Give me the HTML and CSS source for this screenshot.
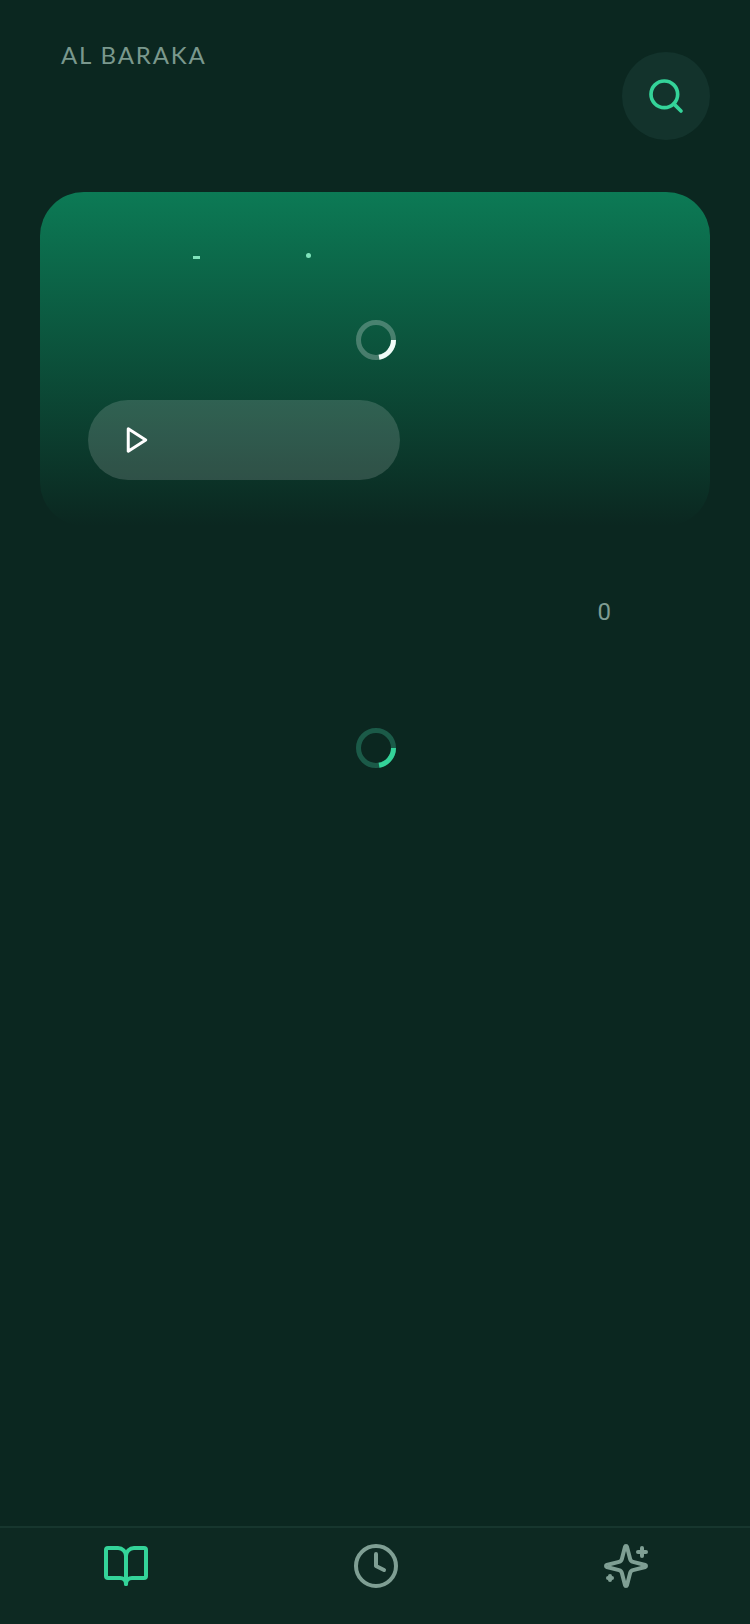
FILE: index.html
```html
<!DOCTYPE html>
<html lang="en">
<head>
    <meta charset="UTF-8">
    <title>Al Baraka</title>
    <link rel="stylesheet" href="styles.css">
</head>
<body>
<div class="page">
    <div class="top-bar">
        <div class="brand">AL BARAKA</div>
        <div class="search-btn">
            <svg class="icon-search" viewBox="0 0 24 24">
                <circle cx="11" cy="11" r="8"></circle>
                <path d="m21 21-4.3-4.3"></path>
            </svg>
        </div>
    </div>

    <div class="hero-card">
        <div class="hero-dates">
            <span class="date-dash"></span>
            <span class="date-dot"></span>
        </div>
        <svg class="spinner spinner-light" viewBox="0 0 40 40">
            <circle class="spinner-track" cx="20" cy="20" r="17.5"></circle>
            <path class="spinner-arc" d="M37.5 20A17.5 17.5 0 0 1 23.04 37.23"></path>
        </svg>
        <div class="play-pill">
            <svg class="icon-play" viewBox="0 0 24 24">
                <polygon points="5 3 19 12 5 21"></polygon>
            </svg>
        </div>
    </div>

    <div class="count-row">0</div>
    <svg class="spinner spinner-green" viewBox="0 0 40 40">
        <circle class="spinner-track" cx="20" cy="20" r="17.5"></circle>
        <path class="spinner-arc" d="M37.5 20A17.5 17.5 0 0 1 23.04 37.23"></path>
    </svg>
</div>

<div class="tab-bar">
    <div class="tab">
        <svg class="tab-icon tab-active" viewBox="0 0 24 24">
            <path d="M12 7v14"></path>
            <path d="M3 18a1 1 0 0 1-1-1V4a1 1 0 0 1 1-1h5a4 4 0 0 1 4 4 4 4 0 0 1 4-4h5a1 1 0 0 1 1 1v13a1 1 0 0 1-1 1h-6a3 3 0 0 0-3 3 3 3 0 0 0-3-3z"></path>
        </svg>
    </div>
    <div class="tab">
        <svg class="tab-icon" viewBox="0 0 24 24">
            <circle cx="12" cy="12" r="10"></circle>
            <polyline points="12 6 12 12 16 14"></polyline>
        </svg>
    </div>
    <div class="tab">
        <svg class="tab-icon" viewBox="0 0 24 24">
            <path d="M9.937 15.5A2 2 0 0 0 8.5 14.063l-6.135-1.582a.5.5 0 0 1 0-.962L8.5 9.936A2 2 0 0 0 9.937 8.5l1.582-6.135a.5.5 0 0 1 .963 0L14.063 8.5A2 2 0 0 0 15.5 9.937l6.135 1.581a.5.5 0 0 1 0 .964L15.5 14.063a2 2 0 0 0-1.437 1.437l-1.582 6.135a.5.5 0 0 1-.963 0z"></path>
            <path d="M20 3v4"></path>
            <path d="M22 5h-4"></path>
            <path d="M4 17v2"></path>
            <path d="M5 18H3"></path>
        </svg>
    </div>
</div>
</body>
</html>
```

FILE: styles.css
```css
html, body {
    height: 100%;
    margin: 0;
}

body {
    display: flex;
    flex-direction: column;
    background: #0b2720;
    font-family: "Lato", "Liberation Sans", sans-serif;
    color: #7f9c92;
}

svg {
    display: block;
    fill: none;
    stroke-linecap: round;
    stroke-linejoin: round;
}

.page {
    flex: 1;
    display: flex;
    flex-direction: column;
}

.top-bar {
    display: flex;
    justify-content: space-between;
    align-items: flex-start;
    padding: 40px 40px 0 61px;
}

.brand {
    font-size: 24px;
    font-weight: 400;
    line-height: 30px;
    letter-spacing: 1.85px;
    color: #7a988d;
}

.search-btn {
    display: flex;
    align-items: center;
    justify-content: center;
    width: 88px;
    height: 88px;
    margin-top: 12px;
    border-radius: 50%;
    background: #13332c;
}

.icon-search {
    width: 40px;
    height: 40px;
    stroke: #34d399;
    stroke-width: 2.2;
}

.hero-card {
    display: flex;
    flex-direction: column;
    margin: 52px 40px 0;
    padding: 61px 48px 46px;
    border-radius: 44px;
    background: linear-gradient(180deg, #0c7a55 0%, #0b2720 100%);
}

.hero-dates {
    display: flex;
    align-items: flex-start;
    gap: 106px;
    height: 7px;
    padding-left: 105px;
}

.date-dash {
    width: 7px;
    height: 3px;
    margin-top: 3px;
    background: #7fe3bb;
}

.date-dot {
    width: 5px;
    height: 5px;
    border-radius: 50%;
    background: #7fe3bb;
}

.spinner {
    flex: none;
    width: 40px;
    height: 40px;
    margin-left: 2px;
    align-self: center;
    stroke-width: 5;
    stroke-linecap: butt;
}

.hero-card .spinner {
    margin-top: 60px;
}

.spinner-light .spinner-track {
    stroke: rgba(255, 255, 255, 0.25);
}

.spinner-light .spinner-arc {
    stroke: #f0fdf8;
}

.spinner-green {
    margin-top: 101px;
}

.spinner-green .spinner-track {
    stroke: #1b5a48;
}

.spinner-green .spinner-arc {
    stroke: #34d399;
}

.play-pill {
    display: flex;
    align-items: center;
    align-self: flex-start;
    box-sizing: border-box;
    width: 312px;
    height: 80px;
    margin-top: 40px;
    padding-left: 34px;
    border-radius: 40px;
    background: rgba(255, 255, 255, 0.15);
}

.icon-play {
    width: 30px;
    height: 30px;
    stroke: #fff;
    stroke-width: 2.4;
}

.count-row {
    margin-top: 71px;
    padding-right: 139px;
    font-family: "Roboto", "Liberation Sans", sans-serif;
    font-size: 24px;
    font-weight: 400;
    line-height: 30px;
    text-align: right;
}

.tab-bar {
    display: flex;
    height: 96px;
    border-top: 2px solid #17362e;
    background: #0d2922;
}

.tab {
    flex: 1;
    display: flex;
    justify-content: center;
    padding: 14px 0 0 2px;
}

.tab-icon {
    width: 48px;
    height: 48px;
    stroke: #7f9f94;
    stroke-width: 2;
}

.tab-active {
    stroke: #34d399;
}
```
